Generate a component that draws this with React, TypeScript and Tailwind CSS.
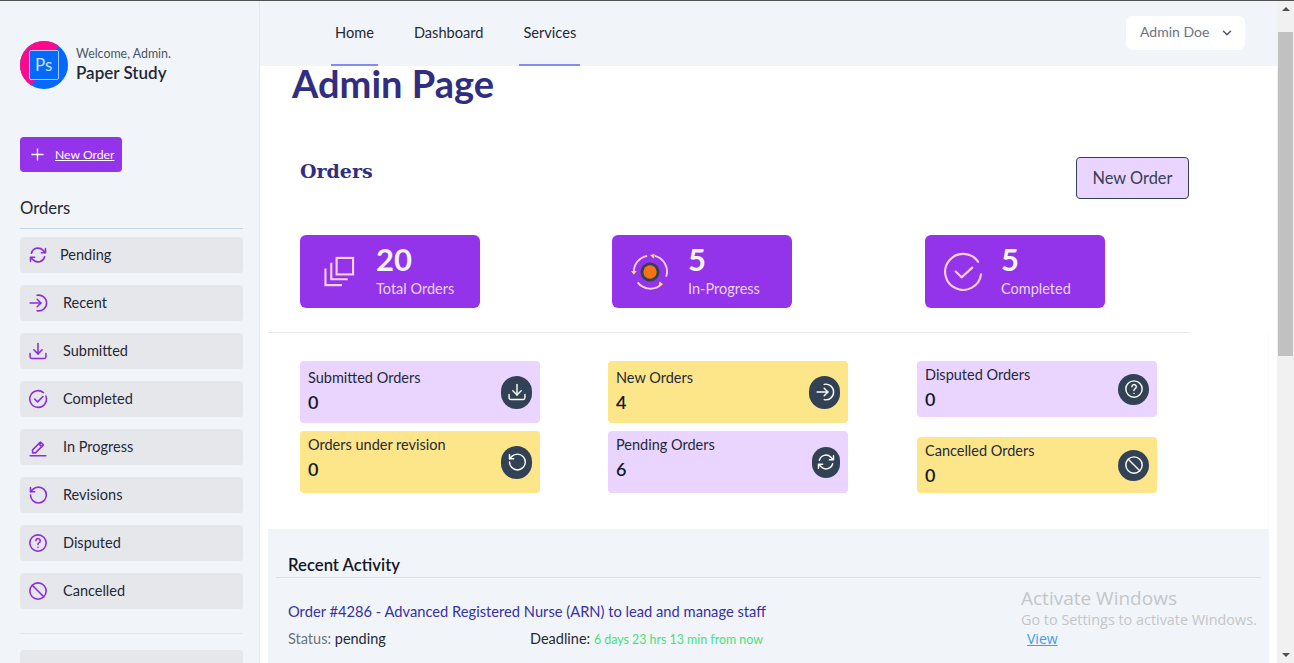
import React from "react";
import { ChevronDown } from "lucide-react";

const P = ({ d, c = "", w = 2 }: { d: string | string[]; c?: string; w?: number }) => (
  <svg viewBox="0 0 24 24" fill="none" stroke="currentColor" strokeWidth={w} strokeLinecap="round" strokeLinejoin="round" className={c}>
    {(Array.isArray(d) ? d : [d]).map((x, i) => <path key={i} d={x} />)}
  </svg>
);
const icons: Record<string, string[]> = {
  sync: ["M16.023 9.348h4.992M2.985 19.644v-4.992m0 0h4.992m-4.993 0l3.181 3.183a8.25 8.25 0 0013.803-3.7M4.031 9.865a8.25 8.25 0 0113.803-3.7l3.181 3.182m0-4.991v4.99"],
  enter: ["M2.5 12h13", "M11 7.5l4.5 4.5-4.5 4.5", "M11 2.8a9.4 9.4 0 1 1 0 18.4"],
  down: ["M2.5 15v4a2 2 0 0 0 2 2h15a2 2 0 0 0 2-2v-4", "M7 10.5l5 5 5-5", "M12 15.5V3"],
  check: ["M21.5 8.5a10 10 0 1 1-3-4.2", "M8 12l3.5 3.5 6.5-6.5"],
  pen: ["M5.5 15.5L15 6l3.5 3.5-9.5 9.5H5.5z", "M13 8l3.5 3.5", "M2.5 22.5h19"],
  undo: ["M3 12a9.5 9.5 0 1 0 9.5-9.5 9.75 9.75 0 0 0-6.74 2.74L3 8", "M3 3v5h5"],
  help: ["M9.5 9.2a2.6 2.6 0 1 1 3.9 2.3c-.8.4-1.4 1-1.4 1.9v.4", "M21.8 12a9.8 9.8 0 1 1-19.6 0 9.8 9.8 0 0 1 19.6 0z", "M12 17.2v.1"],
  ban: ["M21.8 12a9.8 9.8 0 1 1-19.6 0 9.8 9.8 0 0 1 19.6 0z", "M5.1 5.1l13.8 13.8"],
};

const side = [
  ["Pending", "sync"],
  ["Recent", "enter"],
  ["Submitted", "down"],
  ["Completed", "check"],
  ["In Progress", "pen"],
  ["Revisions", "undo"],
  ["Disputed", "help"],
  ["Cancelled", "ban"],
];

function SideItem({ label, icon }: { label: string; icon: string }) {
  return (
    <div className="h-9 rounded bg-[#e5e7eb] flex items-center pl-[8px] text-[14.5px] text-[#1f2937]">
      <P d={icons[icon]} c="w-[20px] h-[20px] text-[#8b2fdc] shrink-0" w={1.9} />
      <span className={label === "Pending" ? "ml-[12px] pb-[1px]" : "ml-[15px] pb-[1px]"}>{label}</span>
    </div>
  );
}

function Stat({ n, label, children }: { n: string; label: string; children: React.ReactNode }) {
  return (
    <div className="w-[180px] h-[73px] rounded-md bg-[#9333ea] flex items-center">
      <div className="w-[76px] flex justify-center shrink-0">{children}</div>
      <div className="flex flex-col pb-[4px]">
        <span className="text-[31px] leading-[36px] font-bold text-[#f3f4f6]">{n}</span>
        <span className="text-[14.5px] leading-[20px] mt-[2px] text-[#e9d5ff]">{label}</span>
      </div>
    </div>
  );
}

function Mini({ t, n, bg, icon, h = "h-[62px]", size = "w-[31px] h-[33px]", pt = "pt-[3px]" }: { t: string; n: string; bg: string; icon: string; h?: string; size?: string; pt?: string }) {
  return (
    <div className={`${h} ${bg} w-[240px] rounded flex items-center justify-between pl-[8px] pr-[8px]`}>
      <div className={`flex flex-col self-start ${pt}`}>
        <span className="text-[14.5px] leading-[21px] text-[#1f2937]">{t}</span>
        <span className="text-[18px] leading-[29px] font-semibold text-[#111827]">{n}</span>
      </div>
      <div className={`${size} rounded-full bg-[#334155] flex items-center justify-center text-white`}>
        <P d={icons[icon]} c="w-[20px] h-[20px]" w={1.7} />
      </div>
    </div>
  );
}

export default function App() {
  return (
    <div className="h-[663px] w-[1294px] overflow-hidden flex flex-col bg-[#f1f5f9] border-t border-[#525252] font-['Lato','Noto_Sans',sans-serif]">
      <div className="flex flex-1 min-h-0">
        <div className="flex flex-1 min-h-0 min-w-0">
          <aside className="w-[260px] shrink-0 bg-[#f1f5f9] border-r border-[#e5e7eb] pl-[20px] pr-[16px] overflow-hidden">
            <div className="flex items-center gap-[8px] mt-[40px] h-[48px]">
              <svg viewBox="0 0 48 48" className="w-[48px] h-[48px] shrink-0">
                <clipPath id="logoClip"><circle cx="24" cy="24" r="24" /></clipPath>
                <g clipPath="url(#logoClip)">
                  <rect width="48" height="48" fill="#0369ff" />
                  <path d="M0 0H42L9 48H0Z" fill="#ff0a8c" />
                </g>
                <rect x="9.5" y="9.5" width="29" height="29" rx="1.5" fill="#0369ff" stroke="#a9c8f5" strokeWidth="1" />
                <text x="15" y="30" fontSize="17" fill="#cfe0fb" fontFamily="Lato">Ps</text>
              </svg>
              <div className="flex flex-col">
                <span className="text-[12.4px] leading-[16px] text-[#4b5563]">Welcome, Admin.</span>
                <span className="text-[17px] leading-[22px] font-semibold text-[#1f2937]">Paper Study</span>
              </div>
            </div>
            <div className="mt-[48px] w-[102px] h-[35px] rounded bg-[#9333ea] flex items-center pl-[10px] text-white">
              <svg viewBox="0 0 16 16" className="w-[15px] h-[15px]" fill="none" stroke="currentColor" strokeWidth={1.4}><path d="M8 1.5v13M1.5 8h13" /></svg>
              <span className="ml-[10px] pt-[1px] text-[12.2px] underline">New Order</span>
            </div>
            <div className="mt-[24px] pb-[8px] border-b border-[#c3d4e6] text-[16.7px] leading-[24px] text-[#1f2937]">Orders</div>
            <div className="mt-[8px] flex flex-col gap-[12px]">
              {side.map(([l, i]) => <SideItem key={l} label={l} icon={i} />)}
            </div>
            <div className="mt-[24px] border-t border-[#e5e7eb]" />
            <div className="mt-[16px] h-9 rounded bg-[#e5e7eb]" />
          </aside>
          <div className="flex-1 min-w-0 flex flex-col">
            <header className="h-[65px] shrink-0 flex items-start justify-between pl-[71px] pr-[32px]">
              <nav className="flex gap-[36px] text-[14.6px] text-[#1f2937]">
                <a className="h-[65px] px-[4px] flex items-center border-b-2 border-[#818cf8]">Home</a>
                <a className="h-[65px] flex items-center border-b-2 border-transparent">Dashboard</a>
                <a className="h-[65px] px-[4px] flex items-center border-b-2 border-[#818cf8]">Services</a>
              </nav>
              <div className="mt-[15px] w-[119px] h-[34px] rounded-md bg-white flex items-center pl-[14px] gap-[12px] text-[14px] text-[#6b7280]">
                <span className="pb-[3px]">Admin Doe</span>
                <ChevronDown className="w-[14px] h-[14px] text-[#4b5563] -ml-[1px]" strokeWidth={2.5} />
              </div>
            </header>
            <main className="flex-1 min-h-0 bg-white">
              <h1 className="ml-[32px] -mt-[2px] relative text-[38px] leading-[38px] font-bold text-[#312e81]">Admin Page</h1>
              <div className="ml-[40px] mr-[88px] mt-[55px] flex items-start justify-between">
                <h2 className="text-[19px] leading-[28px] font-bold text-[#312e81] font-['DejaVu_Serif',serif]">Orders</h2>
                <button className="w-[113px] h-[42px] rounded bg-[#e9d5ff] border border-[#334155] text-[16.4px] text-[#374151]">New Order</button>
              </div>
              <div className="ml-[40px] mt-[36px] flex">
                <Stat n="20" label="Total Orders">
                  <svg viewBox="0 0 32 32" className="w-[31px] h-[31px] ml-[3px]" fill="none" stroke="#fbcfe8" strokeWidth="2.2">
                    <rect x="13" y="2" width="17" height="17" />
                    <path d="M7.5 7v17h17" />
                    <path d="M1.5 13v17h17" />
                  </svg>
                </Stat>
                <div className="w-[132px]" />
                <Stat n="5" label="In-Progress">
                  <svg viewBox="0 0 40 40" className="w-[38px] h-[38px]" fill="none">
                    <path d="M3 19A17 17 0 0 1 17 3" stroke="#fbcfe8" strokeWidth="2" />
                    <path d="M25 3A17 17 0 0 1 37 25" stroke="#fbcfe8" strokeWidth="2" />
                    <path d="M32 33A17 17 0 0 1 7 31" stroke="#fbcfe8" strokeWidth="2" />
                    <path d="M20 2l5 -1 -1 5zM0 19l6 0 -3 4zM30 30l4 3 -5 2z" fill="#fde047" />
                    <circle cx="20" cy="20" r="10" fill="#334155" />
                    <circle cx="20" cy="20" r="7" fill="#f97316" />
                  </svg>
                </Stat>
                <div className="w-[133px]" />
                <Stat n="5" label="Completed">
                  <svg viewBox="0 0 40 40" className="w-[39px] h-[39px]" fill="none" stroke="#fbcfe8" strokeWidth="2.2" strokeLinecap="round" strokeLinejoin="round">
                    <path d="M38 23A18.5 18.5 0 1 1 35 10" />
                    <path d="M12 20l6 6 11-10" />
                  </svg>
                </Stat>
              </div>
              <div className="flex flex-col ml-[8px] mr-[8px]">
                <div className="mt-[24px] mr-[80px] border-t border-[#e5e7eb]" />
                <div className="pl-[32px] pt-[28px] pb-[36px] border-r border-[#f9fafb] flex gap-[68px]">
                  <div className="flex flex-col gap-[8px]">
                    <Mini t="Submitted Orders" n="0" bg="bg-[#e9d5ff]" icon="down" pt="pt-[6px]" />
                    <Mini t="Orders under revision" n="0" bg="bg-[#fde68a]" icon="undo" />
                  </div>
                  <div className="flex flex-col gap-[8px]">
                    <Mini t="New Orders" n="4" bg="bg-[#fde68a]" icon="enter" pt="pt-[6px]" />
                    <Mini t="Pending Orders" n="6" bg="bg-[#e9d5ff]" icon="sync" size="w-[28px] h-[31px]" />
                  </div>
                  <div className="flex flex-col gap-[20px] ml-[1px]">
                    <Mini t="Disputed Orders" n="0" bg="bg-[#e9d5ff]" icon="help" h="h-[56px]" size="w-[31px] h-[31px]" />
                    <Mini t="Cancelled Orders" n="0" bg="bg-[#fde68a]" icon="ban" h="h-[56px]" size="w-[31px] h-[31px]" />
                  </div>
                </div>
                <section className="bg-[#f1f5f9] h-[134px] px-[8px] pt-[24px] relative">
                  <div className="pl-[12px] border-b border-[#e9d5ff] text-[16.7px] leading-[24px] font-semibold text-[#111827]">Recent Activity</div>
                  <div className="pl-[12px] mt-[23px] text-[14.7px] leading-[20px] text-[#3730a3]">Order #4286 - Advanced Registered Nurse (ARN) to lead and manage staff</div>
                  <div className="pl-[12px] mt-[8px] flex text-[14.5px] leading-[20px]">
                    <span className="w-[242px] text-[#6b7280]">Status: <span className="text-[#1f2937]">pending</span></span>
                    <span className="text-[#1f2937]">Deadline: <span className="text-[12.4px] text-[#4ade80]">6 days 23 hrs 13 min from now</span></span>
                  </div>
                  <div className="absolute left-[753px] top-[56px] font-['Open_Sans',sans-serif] text-[#c4c6c9]">
                    <div className="text-[19px] leading-[26px]">Activate Windows</div>
                    <div className="text-[14.4px] leading-[18px]">Go to Settings to activate Windows.</div>
                    <div className="ml-[6px] text-[14px] leading-[19px] text-[#3b9fe8] underline">View</div>
                  </div>
                </section>
              </div>
            </main>
          </div>
        </div>
        <div className="w-[17px] shrink-0 bg-[#f1f1f1] flex flex-col items-center">
          <div className="h-[16px] w-full flex items-center justify-center"><div className="w-0 h-0 border-l-[4px] border-r-[4px] border-b-[4px] border-l-transparent border-r-transparent border-b-[#505050]" /></div>
          <div className="w-[15px] h-[324px] mt-[15px] bg-[#c1c1c1]" />
          <div className="flex-1" />
          <div className="h-[16px] w-full flex items-center justify-center"><div className="w-0 h-0 border-l-[4px] border-r-[4px] border-t-[4px] border-l-transparent border-r-transparent border-t-[#505050]" /></div>
        </div>
      </div>
    </div>
  );
}
